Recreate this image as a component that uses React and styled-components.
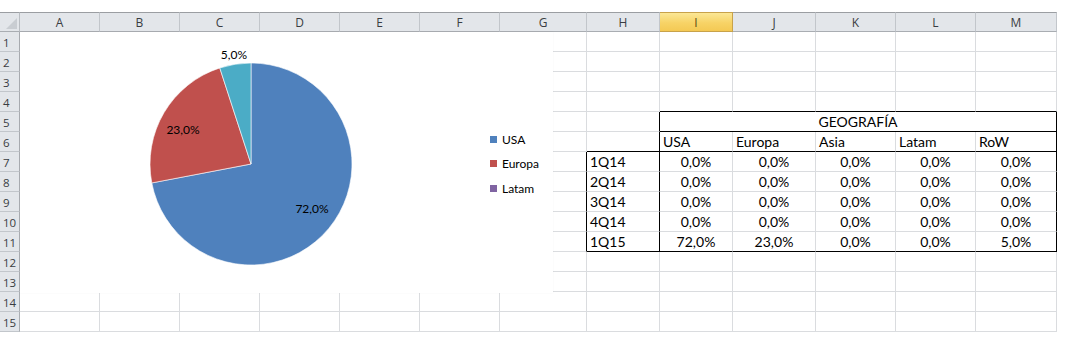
import React from "react";
import styled, { createGlobalStyle } from "styled-components";

const Global = createGlobalStyle`
  html, body { margin: 0; padding: 0; background: #ffffff; }
  body { font-family: "Lato", "Open Sans", sans-serif; }
`;

const GRID = "#dadcdf";
const INK = "#000000";
const COLS = ["A", "B", "C", "D", "E", "F", "G", "H", "I", "J", "K", "L", "M"];
const WIDTHS = [80, 80, 80, 80, 80, 80, 87, 73, 73, 83, 80, 80, 81];

const Sheet = styled.div`
  position: relative;
  margin-top: 12px;
  display: grid;
  grid-template-columns: 20px ${WIDTHS.map((w) => w + "px").join(" ")};
  grid-auto-rows: 20px;
  width: 1057px;
`;

const Corner = styled.div`
  position: relative;
  box-sizing: border-box;
  background: #e3e6ea;
  border-top: 1px solid #9b9ea2;
  border-right: 1px solid #b9bdc2;
  border-bottom: 1px solid #a9adb2;
  &::after {
    content: "";
    position: absolute;
    right: 2px;
    bottom: 2px;
    width: 0;
    height: 0;
    border-left: 11px solid transparent;
    border-bottom: 11px solid #c9cdd2;
  }
`;

const ColHead = styled.div`
  box-sizing: border-box;
  display: flex;
  align-items: center;
  justify-content: center;
  padding-top: 1px;
  font-family: "Open Sans", "Liberation Sans", sans-serif;
  font-size: 12px;
  color: ${(p) => (p.$active ? "#5c4a10" : "#3a3d42")};
  background: ${(p) =>
    p.$active
      ? "linear-gradient(#fbe795, #f7d366 55%, #f4c954)"
      : "#e3e6ea"};
  border-top: 1px solid ${(p) => (p.$active ? "#c8a24a" : "#9b9ea2")};
  border-right: 1px solid ${(p) => (p.$active ? "#c8a24a" : "#c2c6cb")};
  border-bottom: 1px solid ${(p) => (p.$active ? "#c8a24a" : "#a9adb2")};
`;

const RowHead = styled.div`
  box-sizing: border-box;
  display: flex;
  align-items: center;
  padding-left: 3px;
  padding-top: 1px;
  font-family: "Open Sans", "Liberation Sans", sans-serif;
  font-size: 11.5px;
  color: #3a3d42;
  background: #e3e6ea;
  border-right: 1px solid #a9adb2;
  border-bottom: 1px solid #c2c6cb;
`;

const Cell = styled.div`
  box-sizing: border-box;
  grid-column: ${(p) => (p.$span ? `span ${p.$span}` : "auto")};
  display: flex;
  align-items: flex-end;
  justify-content: ${(p) => (p.$center ? "center" : "flex-start")};
  padding: 0 3px 1px 3px;
  font-size: 14px;
  line-height: 17px;
  color: #000;
  white-space: nowrap;
  overflow: hidden;
  background: #fff;
  border-right: 1px solid ${(p) => p.$br || GRID};
  border-bottom: 1px solid ${(p) => p.$bb || GRID};
`;

const Chart = styled.div`
  position: absolute;
  left: 20px;
  top: 20px;
  width: 533px;
  height: 261px;
  background: #fff;
  display: flex;
  align-items: flex-start;
  box-shadow: 0 0 2px rgba(0, 0, 0, 0.04);
`;

const PieSvg = styled.svg`
  display: block;
  flex: none;
`;

const PieLabel = styled.text`
  font-family: "Lato", "Open Sans", sans-serif;
  font-size: 12px;
  fill: #000;
`;

const Legend = styled.div`
  margin-left: 30px;
  margin-top: 95px;
  display: flex;
  flex-direction: column;
`;

const LegendItem = styled.div`
  display: flex;
  align-items: center;
  height: 24.5px;
  gap: 5px;
  font-size: 12px;
  color: #000;
`;

const Swatch = styled.span`
  width: 7px;
  height: 7px;
  background: ${(p) => p.$color};
  flex: none;
`;

const BLUE = "#4f81bd";
const RED = "#c0504d";
const PURPLE = "#8064a2";
const TEAL = "#4bacc6";

const DATA = [
  ["1Q14", "0,0%", "0,0%", "0,0%", "0,0%", "0,0%"],
  ["2Q14", "0,0%", "0,0%", "0,0%", "0,0%", "0,0%"],
  ["3Q14", "0,0%", "0,0%", "0,0%", "0,0%", "0,0%"],
  ["4Q14", "0,0%", "0,0%", "0,0%", "0,0%", "0,0%"],
  ["1Q15", "72,0%", "23,0%", "0,0%", "0,0%", "5,0%"],
];
const HEADS = ["USA", "Europa", "Asia", "Latam", "RoW"];

function buildRow(r) {
  const cells = [];
  for (let c = 0; c < 13; c++) {
    let br;
    let bb;
    let text = "";
    let center = false;
    if (r === 4 && c >= 8) bb = INK;
    if (r === 5) {
      if (c === 7) br = INK;
      if (c === 8) {
        cells.push(
          <Cell key={c} $span={5} $center $br={INK} $bb={INK}>
            GEOGRAFÍA
          </Cell>
        );
        c = 12;
        continue;
      }
    }
    if (r === 6) {
      if (c === 7) br = INK;
      if (c === 12) br = INK;
      if (c >= 7) bb = INK;
      if (c >= 8) text = HEADS[c - 8];
    }
    if (r >= 7 && r <= 11) {
      if (c === 6 || c === 7 || c === 12) br = INK;
      if (r === 11 && c >= 7) bb = INK;
      const row = DATA[r - 7];
      if (c === 7) text = row[0];
      if (c >= 8) {
        text = row[c - 7];
        center = true;
      }
    }
    cells.push(
      <Cell key={c} $br={br} $bb={bb} $center={center}>
        {text}
      </Cell>
    );
  }
  return cells;
}

function Pie() {
  const cx = 231;
  const cy = 132;
  const r = 101;
  const pt = (deg) => {
    const a = (deg * Math.PI) / 180;
    return [cx + r * Math.sin(a), cy - r * Math.cos(a)];
  };
  const slice = (a0, a1) => {
    const [x0, y0] = pt(a0);
    const [x1, y1] = pt(a1);
    const large = a1 - a0 > 180 ? 1 : 0;
    return `M${cx},${cy} L${x0.toFixed(2)},${y0.toFixed(2)} A${r},${r} 0 ${large} 1 ${x1.toFixed(2)},${y1.toFixed(2)} Z`;
  };
  return (
    <PieSvg width="440" height="261" viewBox="0 0 440 261">
      <path d={slice(0, 259.2)} fill={BLUE} stroke="#fff" strokeWidth="0.6" />
      <path d={slice(259.2, 342)} fill={RED} stroke="#fff" strokeWidth="0.6" />
      <path d={slice(342, 360)} fill={TEAL} stroke="#fff" strokeWidth="0.6" />
      <PieLabel x="214" y="27" textAnchor="middle">5,0%</PieLabel>
      <PieLabel x="163" y="102" textAnchor="middle">23,0%</PieLabel>
      <PieLabel x="292" y="181" textAnchor="middle">72,0%</PieLabel>
    </PieSvg>
  );
}

export default function App() {
  return (
    <>
      <Global />
      <Sheet>
        <Corner />
        {COLS.map((c) => (
          <ColHead key={c} $active={c === "I"}>
            {c}
          </ColHead>
        ))}
        {Array.from({ length: 15 }, (_, i) => (
          <React.Fragment key={i}>
            <RowHead>{i + 1}</RowHead>
            {buildRow(i + 1)}
          </React.Fragment>
        ))}
        <Chart>
          <Pie />
          <Legend>
            <LegendItem>
              <Swatch $color={BLUE} />
              USA
            </LegendItem>
            <LegendItem>
              <Swatch $color={RED} />
              Europa
            </LegendItem>
            <LegendItem>
              <Swatch $color={PURPLE} />
              Latam
            </LegendItem>
          </Legend>
        </Chart>
      </Sheet>
    </>
  );
}
